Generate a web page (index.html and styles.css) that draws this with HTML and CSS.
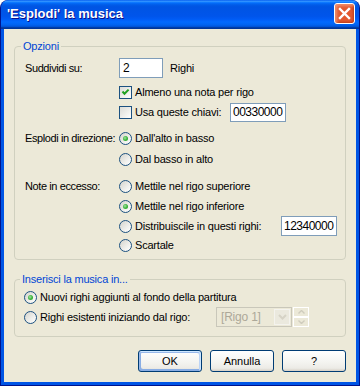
FILE: index.html
```html
<!DOCTYPE html>
<html lang="it">
<head>
<meta charset="utf-8">
<title>'Esplodi' la musica</title>
<link rel="stylesheet" href="styles.css">
</head>
<body>
<div class="window">
  <div class="titlebar">
    <span class="title">'Esplodi' la musica</span>
    <span class="close" aria-label="Chiudi"><svg width="19" height="19" viewBox="0 0 19 19"><path d="M5 5 L14 14 M14 5 L5 14" stroke="#ffffff" stroke-width="2.4" stroke-linecap="square" fill="none"/></svg></span>
  </div>
  <div class="client">
    <fieldset class="group g1">
      <legend>Opzioni</legend>
      <div class="row r1"><span class="lbl">Suddividi su:</span><span class="edit e-num">2</span><span class="after">Righi</span></div>
      <div class="row r2"><span class="lbl"></span><span class="check"><svg width="11" height="11" viewBox="0 0 11 11"><path d="M2.5 4.5 L4.5 6.8 L8.6 2.6" stroke="#21a121" stroke-width="2" fill="none"/></svg></span><span class="opt">Almeno una nota per rigo</span></div>
      <div class="row r3"><span class="lbl"></span><span class="check"></span><span class="opt opt-keys">Usa queste chiavi:</span><span class="edit e-keys">00330000</span></div>
      <div class="row r4"><span class="lbl">Esplodi in direzione:</span><span class="radio on"></span><span class="opt">Dall'alto in basso</span></div>
      <div class="row r5"><span class="lbl"></span><span class="radio"></span><span class="opt">Dal basso in alto</span></div>
      <div class="row r6"><span class="lbl">Note in eccesso:</span><span class="radio"></span><span class="opt">Mettile nel rigo superiore</span></div>
      <div class="row r7"><span class="lbl"></span><span class="radio on"></span><span class="opt">Mettile nel rigo inferiore</span></div>
      <div class="row r8"><span class="lbl"></span><span class="radio"></span><span class="opt opt-dist">Distribuiscile in questi righi:</span><span class="edit e-dist">12340000</span></div>
      <div class="row r9"><span class="lbl"></span><span class="radio"></span><span class="opt">Scartale</span></div>
    </fieldset>
    <fieldset class="group g2">
      <legend>Inserisci la musica in...</legend>
      <div class="row s1"><span class="radio on"></span><span class="opt">Nuovi righi aggiunti al fondo della partitura</span></div>
      <div class="row s2"><span class="radio"></span><span class="opt opt-rigo">Righi esistenti iniziando dal rigo:</span>
        <span class="combo"><span class="combo-text">[Rigo 1]</span><span class="combo-btn"><svg width="9" height="6" viewBox="0 0 9 6"><path d="M1 1 L4.5 4.5 L8 1" stroke="#d6d3c6" stroke-width="2" fill="none"/></svg></span></span>
        <span class="spin"><span class="spin-btn"><svg width="7" height="4" viewBox="0 0 7 4"><path d="M0.5 3.5 L3.5 0.5 L6.5 3.5" stroke="#cfccbd" stroke-width="1.4" fill="none"/></svg></span><span class="spin-btn"><svg width="7" height="4" viewBox="0 0 7 4"><path d="M0.5 0.5 L3.5 3.5 L6.5 0.5" stroke="#cfccbd" stroke-width="1.4" fill="none"/></svg></span></span>
      </div>
    </fieldset>
    <div class="buttons">
      <button class="btn default">OK</button>
      <button class="btn">Annulla</button>
      <button class="btn">?</button>
    </div>
  </div>
</div>
</body>
</html>
```

FILE: styles.css
```css
html, body {
  margin: 0;
  padding: 0;
  background: #fff;
}
body {
  font-family: "Liberation Sans", Arial, sans-serif;
  font-size: 11px;
  line-height: 13px;
  color: #000;
}
.window {
  width: 360px;
  height: 386px;
  box-sizing: border-box;
  display: flex;
  flex-direction: column;
  border-radius: 8px 8px 0 0;
  overflow: hidden;
  border: 1px solid #00138c;
  border-top: 0;
  background: #0055e5;
}
.titlebar {
  height: 29px;
  flex: none;
  display: flex;
  align-items: center;
  justify-content: space-between;
  padding: 0 4px 0 6px;
  box-sizing: border-box;
  border-radius: 8px 8px 0 0;
  background: linear-gradient(to bottom, #0058ee 0%, #3593ff 4%, #288eff 6%, #127dff 8%, #036ffc 10%, #0262ee 14%, #0057e5 20%, #0054e3 24%, #0055eb 56%, #005bf5 66%, #026afe 76%, #0062ef 86%, #0052d6 92%, #0040ab 94%, #003092 100%);
}
.title {
  color: #fff;
  font-family: "Liberation Sans", Arial, sans-serif;
  font-weight: bold;
  font-size: 13px;
  text-shadow: 1px 1px #0f1089;
  margin-top: -2px;
}
.close {
  flex: none;
  width: 21px;
  height: 21px;
  margin-top: -3px;
  box-sizing: border-box;
  border: 1px solid #fff;
  border-radius: 3px;
  background-color: #e2582f;
  box-shadow: inset 2px 2px 3px rgba(255, 190, 160, 0.55), inset -1px -1px 2px rgba(150, 30, 0, 0.5);
  display: flex;
  align-items: center;
  justify-content: center;
}
.close svg { display: block; }
.client {
  flex: 1;
  background: #ece9d8;
  border: solid #0055e5;
  border-width: 0 3px 3px;
  padding: 11px 10px 0 10px;
  display: flex;
  flex-direction: column;
  letter-spacing: -0.2px;
}
.group {
  margin: 0;
  border: 1px solid #d0d0bf;
  border-radius: 4px;
  padding: 5px 0 5px 10px;
  min-width: 0;
}
.group legend {
  color: #0046d5;
  padding: 0 2px;
  margin-left: -4px;
  line-height: 13px;
}
.g2 {
  margin-top: 13px;
  padding: 2px 0 9px 9px;
}
.row {
  display: flex;
  align-items: center;
  height: 18px;
  white-space: nowrap;
}
.lbl {
  width: 94px;
  flex: none;
  letter-spacing: -0.4px;
}
.r1 { height: 20px; }
.r2 { margin-top: 5px; }
.r3 { margin-top: 1px; height: 20px; }
.r4 { margin-top: 7px; }
.r5 { margin-top: 3px; }
.r6 { margin-top: 9px; }
.r7 { margin-top: 2px; }
.r8 { margin-top: 1px; height: 20px; }
.r9 { margin-top: 0; }
.s1 { margin-top: 0; }
.s2 { margin-top: 1px; height: 20px; }
.edit {
  box-sizing: border-box;
  height: 20px;
  border: 1px solid #7f9db9;
  background: #fff;
  padding: 0 3px;
  display: flex;
  align-items: center;
  font-size: 12px;
  letter-spacing: -0.5px;
  flex: none;
}
.e-num { width: 44px; }
.e-keys { width: 56px; height: 19px; padding-left: 2px; }
.e-dist { width: 56px; padding-left: 2px; }
.after { margin-left: 7px; }
.opt { margin-left: 3px; }
.opt-keys { width: 95px; flex: none; }
.opt-dist { width: 146px; flex: none; }
.opt-rigo { width: 176px; flex: none; }
.check, .radio {
  width: 13px;
  height: 13px;
  box-sizing: border-box;
  border: 1px solid #1c5180;
  flex: none;
  display: flex;
  align-items: center;
  justify-content: center;
  background: linear-gradient(135deg, #dcdcd7 0%, #f4f4f1 70%, #fff 100%);
}
.check svg { display: block; }
.radio {
  border-radius: 50%;
  border-color: #1c5180;
  background: linear-gradient(135deg, #d4d3cc 0%, #f2f2ef 65%, #fff 100%);
}
.radio.on::after {
  content: "";
  width: 5px;
  height: 5px;
  border-radius: 50%;
  background: radial-gradient(circle at 40% 40%, #a4e1a4 0%, #3fb63f 50%, #21a121 100%);
}
.combo {
  width: 76px;
  height: 20px;
  flex: none;
  box-sizing: border-box;
  border: 1px solid #c9c7ba;
  background: #ece9d8;
  display: flex;
  align-items: center;
  justify-content: space-between;
  padding: 1px 1px 1px 4px;
}
.combo-text {
  color: #aca899;
  font-size: 12px;
}
.combo-btn {
  width: 16px;
  height: 16px;
  box-sizing: border-box;
  border: 1px solid #f4f3ee;
  background: #ebe9de;
  display: flex;
  align-items: center;
  justify-content: center;
}
.spin {
  margin-left: 1px;
  width: 16px;
  height: 20px;
  display: flex;
  flex-direction: column;
}
.spin-btn {
  flex: 1;
  box-sizing: border-box;
  border: 1px solid #fff;
  background: #ece9d8;
  display: flex;
  align-items: center;
  justify-content: center;
}
.spin-btn svg { display: block; }
.buttons {
  margin-top: 13px;
  display: flex;
  justify-content: flex-end;
  gap: 8px;
}
.btn {
  width: 64px;
  height: 22px;
  padding: 0;
  box-sizing: border-box;
  border: 1px solid #003c74;
  border-radius: 3px;
  font-family: "Liberation Sans", Arial, sans-serif;
  font-size: 11px;
  color: #000;
  background: linear-gradient(180deg, #fff 0%, #f3f3ef 60%, #ecebe6 86%, #d6d0c5 100%);
}
.btn.default {
  box-shadow: inset -1px 1px #cee7ff, inset 1px 2px #98b8ea, inset -2px 2px #bcd4f6, inset 1px -1px #89ade4, inset 2px -2px #89ade4;
}
```
